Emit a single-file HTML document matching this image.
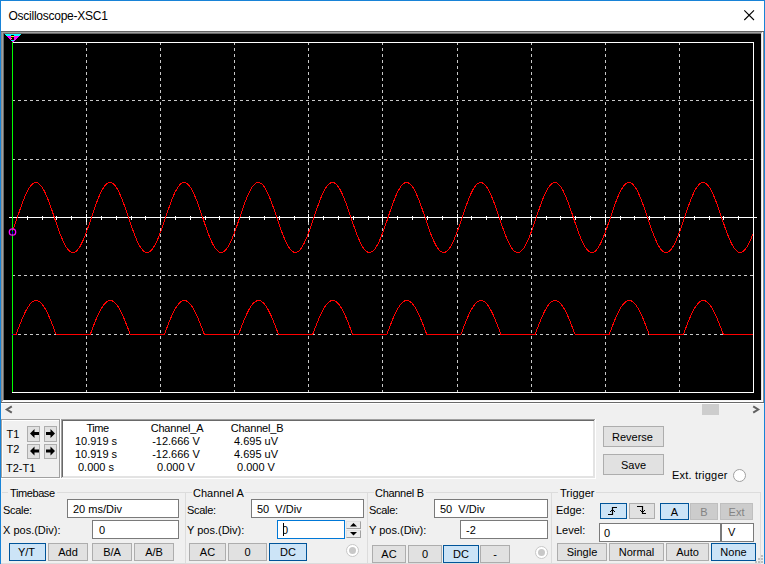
<!DOCTYPE html><html><head><meta charset="utf-8"><style>
html,body{margin:0;padding:0;}
body{width:765px;height:564px;position:relative;overflow:hidden;background:#f0f0f0;font-family:'Liberation Sans', sans-serif;}
.t{position:absolute;white-space:pre;font-size:11px;line-height:13px;}
.r{position:absolute;}
svg{position:absolute;left:0;top:0;}
</style></head><body>
<div class="r" style="left:0px;top:0px;width:765px;height:31px;background:#fff"></div>
<div class="t" style="left:8.5px;top:9px;font-size:12px;color:#000;line-height:14px;letter-spacing:-0.25px">Oscilloscope-XSC1</div>
<svg width="765" height="31" style="left:0;top:0"><path d="M744.3 10.3 L754 20 M754 10.3 L744.3 20" stroke="#000" stroke-width="1.1" fill="none"/></svg>
<div class="r" style="left:1px;top:31px;width:763px;height:372px;background:#8c8c8c"></div>
<div class="r" style="left:2px;top:32px;width:761px;height:370px;background:#fff"></div>
<div class="r" style="left:2px;top:32px;width:760px;height:369px;background:#a0a0a0"></div>
<div class="r" style="left:3px;top:33px;width:759px;height:368px;background:#e3e3e3"></div>
<div class="r" style="left:3px;top:33px;width:758px;height:367px;background:#696969"></div>
<div class="r" style="left:4px;top:34px;width:757px;height:366px;background:#000"></div>
<div class="r" style="left:1px;top:31px;width:763px;height:1px;background:#646464"></div>
<div class="r" style="left:1px;top:402px;width:763px;height:1px;background:#696969"></div>
<div class="r" style="left:1px;top:403px;width:763px;height:1px;background:#fff"></div>
<div class="r" style="left:3px;top:400px;width:759px;height:1px;background:#f4f4f4"></div>
<svg width="765" height="564" style="left:0;top:0"><path d="M86.5 42 V392 M160.5 42 V392 M234.5 42 V392 M308.5 42 V392 M382.5 42 V392 M457.5 42 V392 M531.5 42 V392 M605.5 42 V392 M679.5 42 V392 M12 100.5 H753 M12 159.5 H753 M12 217.5 H753 M12 275.5 H753 M12 334.5 H753" stroke="#c8c8c8" stroke-width="1" stroke-dasharray="3 3" fill="none" shape-rendering="crispEdges"/><path d="M9 217.5 H757 M27.5 216 V220 M42.5 216 V220 M56.5 216 V220 M71.5 216 V220 M86.5 214 V222 M101.5 216 V220 M116.5 216 V220 M131.5 216 V220 M145.5 216 V220 M160.5 214 V222 M175.5 216 V220 M190.5 216 V220 M205.5 216 V220 M219.5 216 V220 M234.5 214 V222 M249.5 216 V220 M264.5 216 V220 M279.5 216 V220 M294.5 216 V220 M308.5 214 V222 M323.5 216 V220 M338.5 216 V220 M353.5 216 V220 M368.5 216 V220 M382.5 214 V222 M397.5 216 V220 M412.5 216 V220 M427.5 216 V220 M442.5 216 V220 M457.5 214 V222 M471.5 216 V220 M486.5 216 V220 M501.5 216 V220 M516.5 216 V220 M531.5 214 V222 M546.5 216 V220 M560.5 216 V220 M575.5 216 V220 M590.5 216 V220 M605.5 214 V222 M620.5 216 V220 M634.5 216 V220 M649.5 216 V220 M664.5 216 V220 M679.5 214 V222 M694.5 216 V220 M709.5 216 V220 M723.5 216 V220 M738.5 216 V220" stroke="#fff" stroke-width="1" fill="none" shape-rendering="crispEdges"/><path d="M12 42.5 H753.5 V392.5 H12" stroke="#fff" stroke-width="1" fill="none" shape-rendering="crispEdges"/><polyline points="12.0,232.7 13.0,230.0 14.0,227.2 15.0,224.3 16.0,221.3 17.0,218.4 18.0,215.4 19.0,212.5 20.0,209.6 21.0,206.7 22.0,203.9 23.0,201.2 24.0,198.7 25.0,196.2 26.0,194.0 27.0,191.9 28.0,189.9 29.0,188.2 30.0,186.7 31.0,185.4 32.0,184.3 33.0,183.5 34.0,182.9 35.0,182.6 36.0,182.5 37.0,182.7 38.0,183.1 39.0,183.8 40.0,184.7 41.0,185.8 42.0,187.2 43.0,188.8 44.0,190.6 45.0,192.5 46.0,194.7 47.0,197.0 48.0,199.5 49.0,202.1 50.0,204.8 51.0,207.6 52.0,210.5 53.0,213.4 54.0,216.4 55.0,219.4 56.0,222.3 57.0,225.2 58.0,228.1 59.0,230.9 60.0,233.6 61.0,236.1 62.0,238.6 63.0,240.9 64.0,243.0 65.0,244.9 66.0,246.7 67.0,248.2 68.0,249.5 69.0,250.6 70.0,251.4 71.0,252.0 72.0,252.4 73.0,252.5 74.0,252.3 75.0,251.9 76.0,251.3 77.0,250.4 78.0,249.3 79.0,247.9 80.0,246.4 81.0,244.6 82.0,242.6 83.0,240.5 84.0,238.1 85.0,235.7 86.0,233.1 87.0,230.4 88.0,227.6 89.0,224.7 90.0,221.8 91.0,218.8 92.0,215.8 93.0,212.9 94.0,210.0 95.0,207.1 96.0,204.3 97.0,201.6 98.0,199.0 99.0,196.6 100.0,194.3 101.0,192.1 102.0,190.2 103.0,188.4 104.0,186.9 105.0,185.6 106.0,184.5 107.0,183.6 108.0,183.0 109.0,182.6 110.0,182.5 111.0,182.6 112.0,183.0 113.0,183.6 114.0,184.5 115.0,185.6 116.0,187.0 117.0,188.5 118.0,190.3 119.0,192.2 120.0,194.4 121.0,196.7 122.0,199.2 123.0,201.7 124.0,204.4 125.0,207.2 126.0,210.1 127.0,213.0 128.0,216.0 129.0,219.0 130.0,221.9 131.0,224.8 132.0,227.7 133.0,230.5 134.0,233.2 135.0,235.8 136.0,238.3 137.0,240.6 138.0,242.7 139.0,244.7 140.0,246.4 141.0,248.0 142.0,249.3 143.0,250.5 144.0,251.3 145.0,252.0 146.0,252.4 147.0,252.5 148.0,252.4 149.0,252.0 150.0,251.4 151.0,250.6 152.0,249.5 153.0,248.1 154.0,246.6 155.0,244.8 156.0,242.9 157.0,240.8 158.0,238.5 159.0,236.0 160.0,233.4 161.0,230.7 162.0,228.0 163.0,225.1 164.0,222.2 165.0,219.2 166.0,216.3 167.0,213.3 168.0,210.4 169.0,207.5 170.0,204.7 171.0,202.0 172.0,199.4 173.0,196.9 174.0,194.6 175.0,192.4 176.0,190.5 177.0,188.7 178.0,187.1 179.0,185.7 180.0,184.6 181.0,183.7 182.0,183.1 183.0,182.7 184.0,182.5 185.0,182.6 186.0,182.9 187.0,183.5 188.0,184.4 189.0,185.5 190.0,186.8 191.0,188.3 192.0,190.0 193.0,192.0 194.0,194.1 195.0,196.4 196.0,198.8 197.0,201.4 198.0,204.1 199.0,206.8 200.0,209.7 201.0,212.6 202.0,215.6 203.0,218.5 204.0,221.5 205.0,224.4 206.0,227.3 207.0,230.1 208.0,232.8 209.0,235.4 210.0,237.9 211.0,240.3 212.0,242.4 213.0,244.4 214.0,246.2 215.0,247.8 216.0,249.2 217.0,250.3 218.0,251.2 219.0,251.9 220.0,252.3 221.0,252.5 222.0,252.4 223.0,252.1 224.0,251.5 225.0,250.7 226.0,249.6 227.0,248.3 228.0,246.8 229.0,245.1 230.0,243.2 231.0,241.1 232.0,238.8 233.0,236.4 234.0,233.8 235.0,231.1 236.0,228.4 237.0,225.5 238.0,222.6 239.0,219.6 240.0,216.7 241.0,213.7 242.0,210.8 243.0,207.9 244.0,205.1 245.0,202.4 246.0,199.7 247.0,197.3 248.0,194.9 249.0,192.7 250.0,190.7 251.0,188.9 252.0,187.3 253.0,185.9 254.0,184.8 255.0,183.8 256.0,183.1 257.0,182.7 258.0,182.5 259.0,182.6 260.0,182.9 261.0,183.4 262.0,184.2 263.0,185.3 264.0,186.6 265.0,188.1 266.0,189.8 267.0,191.7 268.0,193.8 269.0,196.0 270.0,198.5 271.0,201.0 272.0,203.7 273.0,206.5 274.0,209.3 275.0,212.2 276.0,215.2 277.0,218.1 278.0,221.1 279.0,224.0 280.0,226.9 281.0,229.7 282.0,232.5 283.0,235.1 284.0,237.6 285.0,239.9 286.0,242.1 287.0,244.1 288.0,246.0 289.0,247.6 290.0,249.0 291.0,250.2 292.0,251.1 293.0,251.8 294.0,252.3 295.0,252.5 296.0,252.4 297.0,252.1 298.0,251.6 299.0,250.8 300.0,249.8 301.0,248.5 302.0,247.0 303.0,245.4 304.0,243.5 305.0,241.4 306.0,239.1 307.0,236.7 308.0,234.2 309.0,231.5 310.0,228.7 311.0,225.9 312.0,223.0 313.0,220.0 314.0,217.1 315.0,214.1 316.0,211.2 317.0,208.3 318.0,205.5 319.0,202.7 320.0,200.1 321.0,197.6 322.0,195.2 323.0,193.0 324.0,191.0 325.0,189.2 326.0,187.5 327.0,186.1 328.0,184.9 329.0,183.9 330.0,183.2 331.0,182.7 332.0,182.5 333.0,182.5 334.0,182.8 335.0,183.3 336.0,184.1 337.0,185.1 338.0,186.4 339.0,187.8 340.0,189.5 341.0,191.4 342.0,193.5 343.0,195.7 344.0,198.1 345.0,200.6 346.0,203.3 347.0,206.1 348.0,208.9 349.0,211.8 350.0,214.7 351.0,217.7 352.0,220.7 353.0,223.6 354.0,226.5 355.0,229.3 356.0,232.1 357.0,234.7 358.0,237.2 359.0,239.6 360.0,241.8 361.0,243.9 362.0,245.7 363.0,247.4 364.0,248.8 365.0,250.0 366.0,251.0 367.0,251.7 368.0,252.2 369.0,252.5 370.0,252.5 371.0,252.2 372.0,251.7 373.0,250.9 374.0,249.9 375.0,248.7 376.0,247.3 377.0,245.6 378.0,243.7 379.0,241.7 380.0,239.5 381.0,237.1 382.0,234.5 383.0,231.9 384.0,229.1 385.0,226.3 386.0,223.4 387.0,220.5 388.0,217.5 389.0,214.5 390.0,211.6 391.0,208.7 392.0,205.9 393.0,203.1 394.0,200.5 395.0,197.9 396.0,195.5 397.0,193.3 398.0,191.3 399.0,189.4 400.0,187.7 401.0,186.3 402.0,185.1 403.0,184.1 404.0,183.3 405.0,182.8 406.0,182.5 407.0,182.5 408.0,182.8 409.0,183.3 410.0,184.0 411.0,185.0 412.0,186.2 413.0,187.6 414.0,189.3 415.0,191.1 416.0,193.2 417.0,195.4 418.0,197.8 419.0,200.3 420.0,202.9 421.0,205.7 422.0,208.5 423.0,211.4 424.0,214.3 425.0,217.3 426.0,220.3 427.0,223.2 428.0,226.1 429.0,228.9 430.0,231.7 431.0,234.4 432.0,236.9 433.0,239.3 434.0,241.5 435.0,243.6 436.0,245.5 437.0,247.2 438.0,248.6 439.0,249.9 440.0,250.9 441.0,251.7 442.0,252.2 443.0,252.5 444.0,252.5 445.0,252.3 446.0,251.8 447.0,251.1 448.0,250.1 449.0,248.9 450.0,247.5 451.0,245.8 452.0,244.0 453.0,242.0 454.0,239.8 455.0,237.4 456.0,234.9 457.0,232.3 458.0,229.5 459.0,226.7 460.0,223.8 461.0,220.9 462.0,217.9 463.0,215.0 464.0,212.0 465.0,209.1 466.0,206.3 467.0,203.5 468.0,200.8 469.0,198.3 470.0,195.9 471.0,193.6 472.0,191.5 473.0,189.6 474.0,188.0 475.0,186.5 476.0,185.2 477.0,184.2 478.0,183.4 479.0,182.9 480.0,182.6 481.0,182.5 482.0,182.7 483.0,183.2 484.0,183.9 485.0,184.8 486.0,186.0 487.0,187.4 488.0,189.0 489.0,190.9 490.0,192.9 491.0,195.1 492.0,197.4 493.0,199.9 494.0,202.5 495.0,205.3 496.0,208.1 497.0,211.0 498.0,213.9 499.0,216.9 500.0,219.8 501.0,222.8 502.0,225.7 503.0,228.5 504.0,231.3 505.0,234.0 506.0,236.5 507.0,239.0 508.0,241.2 509.0,243.3 510.0,245.2 511.0,246.9 512.0,248.4 513.0,249.7 514.0,250.8 515.0,251.6 516.0,252.1 517.0,252.4 518.0,252.5 519.0,252.3 520.0,251.9 521.0,251.2 522.0,250.2 523.0,249.1 524.0,247.7 525.0,246.1 526.0,244.3 527.0,242.3 528.0,240.1 529.0,237.7 530.0,235.3 531.0,232.6 532.0,229.9 533.0,227.1 534.0,224.2 535.0,221.3 536.0,218.3 537.0,215.4 538.0,212.4 539.0,209.5 540.0,206.6 541.0,203.9 542.0,201.2 543.0,198.6 544.0,196.2 545.0,193.9 546.0,191.8 547.0,189.9 548.0,188.2 549.0,186.7 550.0,185.4 551.0,184.3 552.0,183.5 553.0,182.9 554.0,182.6 555.0,182.5 556.0,182.7 557.0,183.1 558.0,183.8 559.0,184.7 560.0,185.8 561.0,187.2 562.0,188.8 563.0,190.6 564.0,192.6 565.0,194.7 566.0,197.1 567.0,199.6 568.0,202.2 569.0,204.9 570.0,207.7 571.0,210.6 572.0,213.5 573.0,216.5 574.0,219.4 575.0,222.4 576.0,225.3 577.0,228.2 578.0,230.9 579.0,233.6 580.0,236.2 581.0,238.6 582.0,240.9 583.0,243.0 584.0,245.0 585.0,246.7 586.0,248.2 587.0,249.5 588.0,250.6 589.0,251.5 590.0,252.1 591.0,252.4 592.0,252.5 593.0,252.3 594.0,251.9 595.0,251.3 596.0,250.4 597.0,249.3 598.0,247.9 599.0,246.3 600.0,244.5 601.0,242.6 602.0,240.4 603.0,238.1 604.0,235.6 605.0,233.0 606.0,230.3 607.0,227.5 608.0,224.6 609.0,221.7 610.0,218.7 611.0,215.8 612.0,212.8 613.0,209.9 614.0,207.0 615.0,204.3 616.0,201.6 617.0,199.0 618.0,196.5 619.0,194.2 620.0,192.1 621.0,190.2 622.0,188.4 623.0,186.9 624.0,185.5 625.0,184.4 626.0,183.6 627.0,183.0 628.0,182.6 629.0,182.5 630.0,182.6 631.0,183.0 632.0,183.7 633.0,184.5 634.0,185.7 635.0,187.0 636.0,188.6 637.0,190.3 638.0,192.3 639.0,194.4 640.0,196.7 641.0,199.2 642.0,201.8 643.0,204.5 644.0,207.3 645.0,210.2 646.0,213.1 647.0,216.0 648.0,219.0 649.0,222.0 650.0,224.9 651.0,227.8 652.0,230.6 653.0,233.3 654.0,235.8 655.0,238.3 656.0,240.6 657.0,242.8 658.0,244.7 659.0,246.5 660.0,248.0 661.0,249.4 662.0,250.5 663.0,251.4 664.0,252.0 665.0,252.4 666.0,252.5 667.0,252.4 668.0,252.0 669.0,251.4 670.0,250.5 671.0,249.4 672.0,248.1 673.0,246.6 674.0,244.8 675.0,242.9 676.0,240.7 677.0,238.4 678.0,236.0 679.0,233.4 680.0,230.7 681.0,227.9 682.0,225.0 683.0,222.1 684.0,219.2 685.0,216.2 686.0,213.2 687.0,210.3 688.0,207.4 689.0,204.6 690.0,201.9 691.0,199.3 692.0,196.9 693.0,194.5 694.0,192.4 695.0,190.4 696.0,188.6 697.0,187.1 698.0,185.7 699.0,184.6 700.0,183.7 701.0,183.1 702.0,182.7 703.0,182.5 704.0,182.6 705.0,183.0 706.0,183.6 707.0,184.4 708.0,185.5 709.0,186.8 710.0,188.3 711.0,190.1 712.0,192.0 713.0,194.1 714.0,196.4 715.0,198.9 716.0,201.4 717.0,204.1 718.0,206.9 719.0,209.8 720.0,212.7 721.0,215.6 722.0,218.6 723.0,221.6 724.0,224.5 725.0,227.4 726.0,230.2 727.0,232.9 728.0,235.5 729.0,238.0 730.0,240.3 731.0,242.5 732.0,244.4 733.0,246.2 734.0,247.8 735.0,249.2 736.0,250.3 737.0,251.2 738.0,251.9 739.0,252.3 740.0,252.5 741.0,252.4 742.0,252.1 743.0,251.5 744.0,250.7 745.0,249.6 746.0,248.3 747.0,246.8 748.0,245.1 749.0,243.1 750.0,241.0 751.0,238.8 752.0,236.3 753.0,233.8" stroke="#ff0000" stroke-width="1" fill="none" shape-rendering="crispEdges"/><polyline points="12.0,334.5 13.0,334.5 14.0,334.5 15.0,334.5 16.0,334.5 17.0,332.1 18.0,329.4 19.0,326.8 20.0,324.2 21.0,321.7 22.0,319.3 23.0,317.0 24.0,314.7 25.0,312.6 26.0,310.6 27.0,308.8 28.0,307.2 29.0,305.7 30.0,304.3 31.0,303.2 32.0,302.2 33.0,301.5 34.0,301.0 35.0,300.6 36.0,300.5 37.0,300.6 38.0,300.9 39.0,301.4 40.0,302.1 41.0,303.0 42.0,304.1 43.0,305.4 44.0,306.8 45.0,308.5 46.0,310.3 47.0,312.2 48.0,314.3 49.0,316.5 50.0,318.8 51.0,321.2 52.0,323.7 53.0,326.3 54.0,328.9 55.0,331.6 56.0,334.2 57.0,334.5 58.0,334.5 59.0,334.5 60.0,334.5 61.0,334.5 62.0,334.5 63.0,334.5 64.0,334.5 65.0,334.5 66.0,334.5 67.0,334.5 68.0,334.5 69.0,334.5 70.0,334.5 71.0,334.5 72.0,334.5 73.0,334.5 74.0,334.5 75.0,334.5 76.0,334.5 77.0,334.5 78.0,334.5 79.0,334.5 80.0,334.5 81.0,334.5 82.0,334.5 83.0,334.5 84.0,334.5 85.0,334.5 86.0,334.5 87.0,334.5 88.0,334.5 89.0,334.5 90.0,334.5 91.0,332.5 92.0,329.8 93.0,327.2 94.0,324.6 95.0,322.1 96.0,319.6 97.0,317.3 98.0,315.0 99.0,312.9 100.0,310.9 101.0,309.1 102.0,307.4 103.0,305.9 104.0,304.5 105.0,303.3 106.0,302.4 107.0,301.6 108.0,301.0 109.0,300.7 110.0,300.5 111.0,300.6 112.0,300.8 113.0,301.3 114.0,302.0 115.0,302.8 116.0,303.9 117.0,305.2 118.0,306.6 119.0,308.2 120.0,310.0 121.0,311.9 122.0,314.0 123.0,316.2 124.0,318.5 125.0,320.9 126.0,323.4 127.0,325.9 128.0,328.5 129.0,331.2 130.0,333.9 131.0,334.5 132.0,334.5 133.0,334.5 134.0,334.5 135.0,334.5 136.0,334.5 137.0,334.5 138.0,334.5 139.0,334.5 140.0,334.5 141.0,334.5 142.0,334.5 143.0,334.5 144.0,334.5 145.0,334.5 146.0,334.5 147.0,334.5 148.0,334.5 149.0,334.5 150.0,334.5 151.0,334.5 152.0,334.5 153.0,334.5 154.0,334.5 155.0,334.5 156.0,334.5 157.0,334.5 158.0,334.5 159.0,334.5 160.0,334.5 161.0,334.5 162.0,334.5 163.0,334.5 164.0,334.5 165.0,332.8 166.0,330.2 167.0,327.6 168.0,325.0 169.0,322.4 170.0,320.0 171.0,317.6 172.0,315.3 173.0,313.2 174.0,311.2 175.0,309.3 176.0,307.6 177.0,306.1 178.0,304.7 179.0,303.5 180.0,302.5 181.0,301.7 182.0,301.1 183.0,300.7 184.0,300.5 185.0,300.5 186.0,300.8 187.0,301.2 188.0,301.9 189.0,302.7 190.0,303.8 191.0,305.0 192.0,306.4 193.0,308.0 194.0,309.8 195.0,311.7 196.0,313.7 197.0,315.9 198.0,318.2 199.0,320.6 200.0,323.0 201.0,325.6 202.0,328.2 203.0,330.8 204.0,333.5 205.0,334.5 206.0,334.5 207.0,334.5 208.0,334.5 209.0,334.5 210.0,334.5 211.0,334.5 212.0,334.5 213.0,334.5 214.0,334.5 215.0,334.5 216.0,334.5 217.0,334.5 218.0,334.5 219.0,334.5 220.0,334.5 221.0,334.5 222.0,334.5 223.0,334.5 224.0,334.5 225.0,334.5 226.0,334.5 227.0,334.5 228.0,334.5 229.0,334.5 230.0,334.5 231.0,334.5 232.0,334.5 233.0,334.5 234.0,334.5 235.0,334.5 236.0,334.5 237.0,334.5 238.0,334.5 239.0,333.2 240.0,330.6 241.0,327.9 242.0,325.3 243.0,322.8 244.0,320.3 245.0,317.9 246.0,315.7 247.0,313.5 248.0,311.5 249.0,309.6 250.0,307.8 251.0,306.3 252.0,304.9 253.0,303.6 254.0,302.6 255.0,301.8 256.0,301.2 257.0,300.7 258.0,300.5 259.0,300.5 260.0,300.7 261.0,301.1 262.0,301.8 263.0,302.6 264.0,303.6 265.0,304.8 266.0,306.2 267.0,307.8 268.0,309.5 269.0,311.4 270.0,313.4 271.0,315.6 272.0,317.8 273.0,320.2 274.0,322.7 275.0,325.2 276.0,327.8 277.0,330.5 278.0,333.1 279.0,334.5 280.0,334.5 281.0,334.5 282.0,334.5 283.0,334.5 284.0,334.5 285.0,334.5 286.0,334.5 287.0,334.5 288.0,334.5 289.0,334.5 290.0,334.5 291.0,334.5 292.0,334.5 293.0,334.5 294.0,334.5 295.0,334.5 296.0,334.5 297.0,334.5 298.0,334.5 299.0,334.5 300.0,334.5 301.0,334.5 302.0,334.5 303.0,334.5 304.0,334.5 305.0,334.5 306.0,334.5 307.0,334.5 308.0,334.5 309.0,334.5 310.0,334.5 311.0,334.5 312.0,334.5 313.0,333.6 314.0,330.9 315.0,328.3 316.0,325.7 317.0,323.1 318.0,320.7 319.0,318.3 320.0,316.0 321.0,313.8 322.0,311.7 323.0,309.8 324.0,308.1 325.0,306.5 326.0,305.0 327.0,303.8 328.0,302.8 329.0,301.9 330.0,301.2 331.0,300.8 332.0,300.5 333.0,300.5 334.0,300.7 335.0,301.1 336.0,301.7 337.0,302.5 338.0,303.4 339.0,304.6 340.0,306.0 341.0,307.5 342.0,309.2 343.0,311.1 344.0,313.1 345.0,315.3 346.0,317.5 347.0,319.9 348.0,322.3 349.0,324.9 350.0,327.4 351.0,330.1 352.0,332.7 353.0,334.5 354.0,334.5 355.0,334.5 356.0,334.5 357.0,334.5 358.0,334.5 359.0,334.5 360.0,334.5 361.0,334.5 362.0,334.5 363.0,334.5 364.0,334.5 365.0,334.5 366.0,334.5 367.0,334.5 368.0,334.5 369.0,334.5 370.0,334.5 371.0,334.5 372.0,334.5 373.0,334.5 374.0,334.5 375.0,334.5 376.0,334.5 377.0,334.5 378.0,334.5 379.0,334.5 380.0,334.5 381.0,334.5 382.0,334.5 383.0,334.5 384.0,334.5 385.0,334.5 386.0,334.5 387.0,334.0 388.0,331.3 389.0,328.7 390.0,326.0 391.0,323.5 392.0,321.0 393.0,318.6 394.0,316.3 395.0,314.1 396.0,312.0 397.0,310.1 398.0,308.3 399.0,306.7 400.0,305.2 401.0,304.0 402.0,302.9 403.0,302.0 404.0,301.3 405.0,300.8 406.0,300.6 407.0,300.5 408.0,300.7 409.0,301.0 410.0,301.6 411.0,302.3 412.0,303.3 413.0,304.5 414.0,305.8 415.0,307.3 416.0,309.0 417.0,310.8 418.0,312.8 419.0,314.9 420.0,317.2 421.0,319.5 422.0,322.0 423.0,324.5 424.0,327.1 425.0,329.7 426.0,332.4 427.0,334.5 428.0,334.5 429.0,334.5 430.0,334.5 431.0,334.5 432.0,334.5 433.0,334.5 434.0,334.5 435.0,334.5 436.0,334.5 437.0,334.5 438.0,334.5 439.0,334.5 440.0,334.5 441.0,334.5 442.0,334.5 443.0,334.5 444.0,334.5 445.0,334.5 446.0,334.5 447.0,334.5 448.0,334.5 449.0,334.5 450.0,334.5 451.0,334.5 452.0,334.5 453.0,334.5 454.0,334.5 455.0,334.5 456.0,334.5 457.0,334.5 458.0,334.5 459.0,334.5 460.0,334.5 461.0,334.3 462.0,331.7 463.0,329.0 464.0,326.4 465.0,323.8 466.0,321.3 467.0,318.9 468.0,316.6 469.0,314.4 470.0,312.3 471.0,310.3 472.0,308.5 473.0,306.9 474.0,305.4 475.0,304.1 476.0,303.0 477.0,302.1 478.0,301.4 479.0,300.9 480.0,300.6 481.0,300.5 482.0,300.6 483.0,300.9 484.0,301.5 485.0,302.2 486.0,303.1 487.0,304.3 488.0,305.6 489.0,307.1 490.0,308.8 491.0,310.6 492.0,312.5 493.0,314.6 494.0,316.9 495.0,319.2 496.0,321.6 497.0,324.1 498.0,326.7 499.0,329.3 500.0,332.0 501.0,334.5 502.0,334.5 503.0,334.5 504.0,334.5 505.0,334.5 506.0,334.5 507.0,334.5 508.0,334.5 509.0,334.5 510.0,334.5 511.0,334.5 512.0,334.5 513.0,334.5 514.0,334.5 515.0,334.5 516.0,334.5 517.0,334.5 518.0,334.5 519.0,334.5 520.0,334.5 521.0,334.5 522.0,334.5 523.0,334.5 524.0,334.5 525.0,334.5 526.0,334.5 527.0,334.5 528.0,334.5 529.0,334.5 530.0,334.5 531.0,334.5 532.0,334.5 533.0,334.5 534.0,334.5 535.0,334.5 536.0,332.0 537.0,329.4 538.0,326.8 539.0,324.2 540.0,321.7 541.0,319.3 542.0,316.9 543.0,314.7 544.0,312.6 545.0,310.6 546.0,308.8 547.0,307.1 548.0,305.6 549.0,304.3 550.0,303.2 551.0,302.2 552.0,301.5 553.0,301.0 554.0,300.6 555.0,300.5 556.0,300.6 557.0,300.9 558.0,301.4 559.0,302.1 560.0,303.0 561.0,304.1 562.0,305.4 563.0,306.9 564.0,308.5 565.0,310.3 566.0,312.3 567.0,314.3 568.0,316.6 569.0,318.9 570.0,321.3 571.0,323.8 572.0,326.4 573.0,329.0 574.0,331.6 575.0,334.3 576.0,334.5 577.0,334.5 578.0,334.5 579.0,334.5 580.0,334.5 581.0,334.5 582.0,334.5 583.0,334.5 584.0,334.5 585.0,334.5 586.0,334.5 587.0,334.5 588.0,334.5 589.0,334.5 590.0,334.5 591.0,334.5 592.0,334.5 593.0,334.5 594.0,334.5 595.0,334.5 596.0,334.5 597.0,334.5 598.0,334.5 599.0,334.5 600.0,334.5 601.0,334.5 602.0,334.5 603.0,334.5 604.0,334.5 605.0,334.5 606.0,334.5 607.0,334.5 608.0,334.5 609.0,334.5 610.0,332.4 611.0,329.8 612.0,327.1 613.0,324.6 614.0,322.0 615.0,319.6 616.0,317.2 617.0,315.0 618.0,312.9 619.0,310.9 620.0,309.0 621.0,307.3 622.0,305.8 623.0,304.5 624.0,303.3 625.0,302.4 626.0,301.6 627.0,301.0 628.0,300.7 629.0,300.5 630.0,300.6 631.0,300.8 632.0,301.3 633.0,302.0 634.0,302.9 635.0,303.9 636.0,305.2 637.0,306.7 638.0,308.3 639.0,310.0 640.0,312.0 641.0,314.0 642.0,316.2 643.0,318.5 644.0,320.9 645.0,323.4 646.0,326.0 647.0,328.6 648.0,331.2 649.0,333.9 650.0,334.5 651.0,334.5 652.0,334.5 653.0,334.5 654.0,334.5 655.0,334.5 656.0,334.5 657.0,334.5 658.0,334.5 659.0,334.5 660.0,334.5 661.0,334.5 662.0,334.5 663.0,334.5 664.0,334.5 665.0,334.5 666.0,334.5 667.0,334.5 668.0,334.5 669.0,334.5 670.0,334.5 671.0,334.5 672.0,334.5 673.0,334.5 674.0,334.5 675.0,334.5 676.0,334.5 677.0,334.5 678.0,334.5 679.0,334.5 680.0,334.5 681.0,334.5 682.0,334.5 683.0,334.5 684.0,332.8 685.0,330.1 686.0,327.5 687.0,324.9 688.0,322.4 689.0,319.9 690.0,317.6 691.0,315.3 692.0,313.2 693.0,311.1 694.0,309.3 695.0,307.6 696.0,306.0 697.0,304.7 698.0,303.5 699.0,302.5 700.0,301.7 701.0,301.1 702.0,300.7 703.0,300.5 704.0,300.5 705.0,300.8 706.0,301.2 707.0,301.9 708.0,302.7 709.0,303.8 710.0,305.0 711.0,306.4 712.0,308.0 713.0,309.8 714.0,311.7 715.0,313.7 716.0,315.9 717.0,318.2 718.0,320.6 719.0,323.1 720.0,325.6 721.0,328.2 722.0,330.9 723.0,333.5 724.0,334.5 725.0,334.5 726.0,334.5 727.0,334.5 728.0,334.5 729.0,334.5 730.0,334.5 731.0,334.5 732.0,334.5 733.0,334.5 734.0,334.5 735.0,334.5 736.0,334.5 737.0,334.5 738.0,334.5 739.0,334.5 740.0,334.5 741.0,334.5 742.0,334.5 743.0,334.5 744.0,334.5 745.0,334.5 746.0,334.5 747.0,334.5 748.0,334.5 749.0,334.5 750.0,334.5 751.0,334.5 752.0,334.5 753.0,334.5" stroke="#ff0000" stroke-width="1" fill="none" shape-rendering="crispEdges"/><path d="M12.5 42 V392" stroke="#00ff00" stroke-width="1" shape-rendering="crispEdges"/><circle cx="12.5" cy="232" r="3.2" stroke="#ff00ff" stroke-width="1.3" fill="none"/><rect x="12" y="231" width="1" height="3" fill="#0000ff"/><rect x="12" y="334" width="1" height="1" fill="#0000ff"/><path d="M4 34 H21.5 L12.75 42.5 Z" fill="#ff00ff" shape-rendering="crispEdges"/><path d="M4 34 H21.5 L19.4 36 H6.1 Z" fill="#00ffff" shape-rendering="crispEdges"/><rect x="11" y="35" width="3" height="5" fill="#000"/><rect x="11" y="36" width="3" height="1" fill="#ffff00"/><rect x="11" y="38" width="1" height="1" fill="#ffff00"/><rect x="11" y="40" width="3" height="1" fill="#00ffff"/></svg>
<svg width="765" height="564" style="left:0;top:0"><path d="M11.8 406.3 L6.8 409.5 L11.8 412.7" stroke="#606060" stroke-width="2" fill="none"/><path d="M753.2 406.3 L758.2 409.5 L753.2 412.7" stroke="#606060" stroke-width="2" fill="none"/></svg>
<div class="r" style="left:702px;top:404px;width:17px;height:11px;background:#cdcdcd"></div>
<div class="r" style="left:1px;top:419px;width:59px;height:59px;border-top:1px solid #a0a0a0;border-left:1px solid #a0a0a0;box-sizing:border-box"></div>
<div class="r" style="left:2px;top:420px;width:59px;height:59px;border-top:1px solid #fff;border-left:1px solid #fff;box-sizing:border-box"></div>
<div class="r" style="left:59px;top:419px;width:1px;height:59px;background:#a0a0a0"></div>
<div class="r" style="left:1px;top:477px;width:59px;height:1px;background:#a0a0a0"></div>
<div class="r" style="left:60px;top:419px;width:1px;height:60px;background:#fff"></div>
<div class="r" style="left:1px;top:478px;width:60px;height:1px;background:#fff"></div>
<div class="t" style="left:6.5px;top:428px;font-size:11px;color:#000;">T1</div>
<div class="t" style="left:6.5px;top:443px;font-size:11px;color:#000;">T2</div>
<div class="t" style="left:6px;top:462px;font-size:11px;color:#000;">T2-T1</div>
<div class="r" style="left:27px;top:426px;width:13px;height:16px;border:1px solid #adadad;background:#e1e1e1;box-sizing:border-box"></div>
<div class="r" style="left:44px;top:426px;width:13px;height:16px;border:1px solid #adadad;background:#e1e1e1;box-sizing:border-box"></div>
<div class="r" style="left:27px;top:444px;width:13px;height:15px;border:1px solid #adadad;background:#e1e1e1;box-sizing:border-box"></div>
<div class="r" style="left:44px;top:444px;width:13px;height:15px;border:1px solid #adadad;background:#e1e1e1;box-sizing:border-box"></div>
<svg width="765" height="564" style="left:0;top:0"><path d="M30 433.5 L34.5 429 V432 H39 V435 H34.5 V438 Z" fill="#000"/><path d="M55 433.5 L50.5 429 V432 H46 V435 H50.5 V438 Z" fill="#000"/><path d="M30 451 L34.5 446.5 V449.5 H39 V452.5 H34.5 V455.5 Z" fill="#000"/><path d="M55 451 L50.5 446.5 V449.5 H46 V452.5 H50.5 V455.5 Z" fill="#000"/></svg>
<div class="r" style="left:61px;top:419px;width:535px;height:60px;background:#fff"></div>
<div class="r" style="left:61px;top:419px;width:534px;height:59px;background:#e3e3e3"></div>
<div class="r" style="left:61px;top:419px;width:534px;height:59px;border-top:1px solid #a0a0a0;border-left:1px solid #a0a0a0;box-sizing:border-box;background:#e3e3e3"></div>
<div class="r" style="left:62px;top:420px;width:532px;height:57px;background:#696969"></div>
<div class="r" style="left:63px;top:421px;width:531px;height:56px;background:#e3e3e3"></div>
<div class="r" style="left:63px;top:421px;width:530px;height:55px;background:#fff"></div>
<div class="t" style="left:-2.5px;top:422px;width:200px;text-align:center;letter-spacing:-0.5px">Time</div>
<div class="t" style="left:77px;top:422px;width:200px;text-align:center;letter-spacing:-0.2px">Channel_A</div>
<div class="t" style="left:157px;top:422px;width:200px;text-align:center;letter-spacing:-0.2px">Channel_B</div>
<div class="t" style="left:-4.0px;top:435px;width:200px;text-align:center;font-size:11px;color:#000">10.919 s</div>
<div class="t" style="left:76.0px;top:435px;width:200px;text-align:center;font-size:11px;color:#000">-12.666 V</div>
<div class="t" style="left:156.0px;top:435px;width:200px;text-align:center;font-size:11px;color:#000">4.695 uV</div>
<div class="t" style="left:-4.0px;top:448px;width:200px;text-align:center;font-size:11px;color:#000">10.919 s</div>
<div class="t" style="left:76.0px;top:448px;width:200px;text-align:center;font-size:11px;color:#000">-12.666 V</div>
<div class="t" style="left:156.0px;top:448px;width:200px;text-align:center;font-size:11px;color:#000">4.695 uV</div>
<div class="t" style="left:-4.0px;top:461px;width:200px;text-align:center;font-size:11px;color:#000">0.000 s</div>
<div class="t" style="left:76.0px;top:461px;width:200px;text-align:center;font-size:11px;color:#000">0.000 V</div>
<div class="t" style="left:156.0px;top:461px;width:200px;text-align:center;font-size:11px;color:#000">0.000 V</div>
<div class="r" style="left:603px;top:426px;width:61px;height:21px;border:1px solid #adadad;background:#e1e1e1;box-sizing:border-box"></div>
<div class="t" style="left:532.5px;top:431px;width:200px;text-align:center;font-size:11px;color:#000">Reverse</div>
<div class="r" style="left:603px;top:454px;width:61px;height:21px;border:1px solid #adadad;background:#e1e1e1;box-sizing:border-box"></div>
<div class="t" style="left:533.5px;top:459px;width:200px;text-align:center;font-size:11px;color:#000">Save</div>
<div class="t" style="left:672px;top:469px;font-size:11px;color:#000;letter-spacing:0.2px">Ext. trigger</div>
<svg width="765" height="564" style="left:0;top:0"><circle cx="739.5" cy="475.5" r="6" fill="#fff" stroke="#a0a0a0" stroke-width="1"/></svg>
<svg width="765" height="564" style="left:0;top:0">
<path d="M2 492.5 H8 M57 492.5 H192 M245 492.5 H374 M426 492.5 H558 M596 492.5 H761 M185.5 492 V563 M367.5 492 V563 M551.5 492 V563 M760.5 492 V563 M1 563.5 H761" stroke="#dcdcdc" stroke-width="1" fill="none" shape-rendering="crispEdges"/></svg>
<div class="t" style="left:10px;top:487px;font-size:11px;color:#000;letter-spacing:-0.4px">Timebase</div>
<div class="t" style="left:193px;top:487px;font-size:11px;color:#000;">Channel A</div>
<div class="t" style="left:375px;top:487px;font-size:11px;color:#000;letter-spacing:-0.3px">Channel B</div>
<div class="t" style="left:560px;top:487px;font-size:11px;color:#000;">Trigger</div>
<div class="t" style="left:3px;top:504px;font-size:11px;color:#000;letter-spacing:-0.3px">Scale:</div>
<div class="r" style="left:67px;top:499px;width:112px;height:19px;border:1px solid #7a7a7a;background:#fff;box-sizing:border-box"></div>
<div class="t" style="left:73px;top:503px;font-size:11px;color:#000;">20 ms/Div</div>
<div class="t" style="left:3px;top:524px;font-size:11px;color:#000;">X pos.(Div):</div>
<div class="r" style="left:92px;top:520px;width:87px;height:19px;border:1px solid #7a7a7a;background:#fff;box-sizing:border-box"></div>
<div class="t" style="left:99px;top:524px;font-size:11px;color:#000;">0</div>
<div class="r" style="left:9px;top:543px;width:37px;height:18px;border:1px solid #005499;background:#cce4f7;box-sizing:border-box"></div>
<div class="t" style="left:-73.5px;top:546px;width:200px;text-align:center;font-size:11px;color:#000">Y/T</div>
<div class="r" style="left:48px;top:543px;width:40px;height:18px;border:1px solid #adadad;background:#e1e1e1;box-sizing:border-box"></div>
<div class="t" style="left:-32.0px;top:546px;width:200px;text-align:center;font-size:11px;color:#000">Add</div>
<div class="r" style="left:92px;top:543px;width:40px;height:18px;border:1px solid #adadad;background:#e1e1e1;box-sizing:border-box"></div>
<div class="t" style="left:12.0px;top:546px;width:200px;text-align:center;font-size:11px;color:#000">B/A</div>
<div class="r" style="left:134px;top:543px;width:40px;height:18px;border:1px solid #adadad;background:#e1e1e1;box-sizing:border-box"></div>
<div class="t" style="left:54.0px;top:546px;width:200px;text-align:center;font-size:11px;color:#000">A/B</div>
<div class="t" style="left:187px;top:504px;font-size:11px;color:#000;letter-spacing:-0.3px">Scale:</div>
<div class="r" style="left:251px;top:499px;width:113px;height:19px;border:1px solid #7a7a7a;background:#fff;box-sizing:border-box"></div>
<div class="t" style="left:257px;top:503px;font-size:11px;color:#000;">50  V/Div</div>
<div class="t" style="left:187px;top:524px;font-size:11px;color:#000;">Y pos.(Div):</div>
<div class="r" style="left:277px;top:520px;width:68px;height:19px;border:1px solid #0078d7;background:#fff;box-sizing:border-box"></div>
<div class="t" style="left:282px;top:524px;font-size:11px;color:#000;">0</div>
<div class="r" style="left:280px;top:523px;width:3px;height:14px;background:#fff"></div>
<div class="r" style="left:283px;top:523px;width:1px;height:13px;background:#000"></div>
<div class="r" style="left:346px;top:521px;width:15px;height:8px;border:1px solid;border-color:#e0e0e0 #a0a0a0 #a0a0a0 #e0e0e0;background:#ececec;box-sizing:border-box"></div>
<div class="r" style="left:346px;top:530px;width:15px;height:8px;border:1px solid;border-color:#e0e0e0 #a0a0a0 #a0a0a0 #e0e0e0;background:#ececec;box-sizing:border-box"></div>
<svg width="765" height="564" style="left:0;top:0"><path d="M350 526.5 L353.5 523 L357 526.5 Z" fill="#000"/><path d="M350 532 L353.5 535.5 L357 532 Z" fill="#000"/><circle cx="352.5" cy="550.5" r="6" fill="#fff" stroke="#c8c8c8" stroke-width="1"/><circle cx="352.5" cy="550.5" r="3.5" fill="#c8c8c8"/></svg>
<div class="r" style="left:189px;top:543px;width:37px;height:18px;border:1px solid #adadad;background:#e1e1e1;box-sizing:border-box"></div>
<div class="t" style="left:107.5px;top:546px;width:200px;text-align:center;font-size:11px;color:#000">AC</div>
<div class="r" style="left:228px;top:543px;width:39px;height:18px;border:1px solid #adadad;background:#e1e1e1;box-sizing:border-box"></div>
<div class="t" style="left:147.5px;top:546px;width:200px;text-align:center;font-size:11px;color:#000">0</div>
<div class="r" style="left:269px;top:543px;width:38px;height:18px;border:1px solid #005499;background:#cce4f7;box-sizing:border-box"></div>
<div class="t" style="left:188.0px;top:546px;width:200px;text-align:center;font-size:11px;color:#000">DC</div>
<div class="t" style="left:369px;top:504px;font-size:11px;color:#000;letter-spacing:-0.3px">Scale:</div>
<div class="r" style="left:434px;top:499px;width:114px;height:19px;border:1px solid #7a7a7a;background:#fff;box-sizing:border-box"></div>
<div class="t" style="left:440px;top:503px;font-size:11px;color:#000;">50  V/Div</div>
<div class="t" style="left:369px;top:524px;font-size:11px;color:#000;">Y pos.(Div):</div>
<div class="r" style="left:460px;top:520px;width:88px;height:19px;border:1px solid #7a7a7a;background:#fff;box-sizing:border-box"></div>
<div class="t" style="left:466px;top:524px;font-size:11px;color:#000;">-2</div>
<div class="r" style="left:372px;top:545px;width:34px;height:18px;border:1px solid #adadad;background:#e1e1e1;box-sizing:border-box"></div>
<div class="t" style="left:289.0px;top:548px;width:200px;text-align:center;font-size:11px;color:#000">AC</div>
<div class="r" style="left:408px;top:545px;width:34px;height:18px;border:1px solid #adadad;background:#e1e1e1;box-sizing:border-box"></div>
<div class="t" style="left:325.0px;top:548px;width:200px;text-align:center;font-size:11px;color:#000">0</div>
<div class="r" style="left:443px;top:545px;width:36px;height:18px;border:1px solid #005499;background:#cce4f7;box-sizing:border-box"></div>
<div class="t" style="left:361.0px;top:548px;width:200px;text-align:center;font-size:11px;color:#000">DC</div>
<div class="r" style="left:480px;top:545px;width:30px;height:18px;border:1px solid #adadad;background:#e1e1e1;box-sizing:border-box"></div>
<div class="t" style="left:395.0px;top:548px;width:200px;text-align:center;font-size:11px;color:#000">-</div>
<svg width="765" height="564" style="left:0;top:0"><circle cx="541.5" cy="552.5" r="6" fill="#fff" stroke="#c8c8c8" stroke-width="1"/><circle cx="541.5" cy="552.5" r="3.5" fill="#c8c8c8"/></svg>
<div class="t" style="left:556px;top:504px;font-size:11px;color:#000;">Edge:</div>
<div class="t" style="left:556px;top:524px;font-size:11px;color:#000;">Level:</div>
<div class="r" style="left:600px;top:503px;width:27px;height:16px;border:1px solid #005499;background:#cce4f7;box-sizing:border-box"></div>
<div class="r" style="left:629px;top:503px;width:26px;height:16px;border:1px solid #adadad;background:#e1e1e1;box-sizing:border-box"></div>
<svg width="765" height="564" style="left:0;top:0"><path d="M608 514.5 H612.5 V507.5 H617" stroke="#000" stroke-width="1.2" fill="none"/><path d="M610 512 L612.5 509.5 L615 512" stroke="#000" stroke-width="1" fill="none"/><path d="M637 506.5 H642.5 V513.5 H646" stroke="#000" stroke-width="1.2" fill="none"/><path d="M640 510 L642.5 512.5 L645 510" stroke="#000" stroke-width="1" fill="none"/></svg>
<div class="r" style="left:660px;top:503px;width:29px;height:17px;border:1px solid #005499;background:#cce4f7;box-sizing:border-box"></div>
<div class="t" style="left:574.5px;top:506px;width:200px;text-align:center;font-size:11px;color:#000">A</div>
<div class="r" style="left:690px;top:503px;width:28px;height:17px;border:1px solid #bfbfbf;background:#cccccc;box-sizing:border-box"></div>
<div class="t" style="left:604.0px;top:506px;width:200px;text-align:center;font-size:11px;color:#838383">B</div>
<div class="r" style="left:720px;top:503px;width:33px;height:17px;border:1px solid #bfbfbf;background:#cccccc;box-sizing:border-box"></div>
<div class="t" style="left:636.5px;top:506px;width:200px;text-align:center;font-size:11px;color:#838383">Ext</div>
<div class="r" style="left:599px;top:523px;width:122px;height:19px;border:1px solid #7a7a7a;background:#fff;box-sizing:border-box"></div>
<div class="t" style="left:604px;top:527px;font-size:11px;color:#000;">0</div>
<div class="r" style="left:721px;top:523px;width:33px;height:19px;border:1px solid #7a7a7a;background:#fff;box-sizing:border-box"></div>
<div class="t" style="left:728px;top:526px;font-size:11px;color:#000;">V</div>
<div class="r" style="left:557px;top:543px;width:50px;height:18px;border:1px solid #adadad;background:#e1e1e1;box-sizing:border-box"></div>
<div class="t" style="left:482.0px;top:546px;width:200px;text-align:center;font-size:11px;color:#000">Single</div>
<div class="r" style="left:609px;top:543px;width:55px;height:18px;border:1px solid #adadad;background:#e1e1e1;box-sizing:border-box"></div>
<div class="t" style="left:536.5px;top:546px;width:200px;text-align:center;font-size:11px;color:#000">Normal</div>
<div class="r" style="left:666px;top:543px;width:43px;height:18px;border:1px solid #adadad;background:#e1e1e1;box-sizing:border-box"></div>
<div class="t" style="left:587.5px;top:546px;width:200px;text-align:center;font-size:11px;color:#000">Auto</div>
<div class="r" style="left:711px;top:543px;width:45px;height:18px;border:1px solid #005499;background:#cce4f7;box-sizing:border-box"></div>
<div class="t" style="left:633.5px;top:546px;width:200px;text-align:center;font-size:11px;color:#000">None</div>
<svg width="765" height="564" style="left:0;top:0">
<rect x="761" y="555" width="2" height="2" fill="#bdbdbd"/>
<rect x="761" y="558" width="2" height="2" fill="#bdbdbd"/>
<rect x="758" y="558" width="2" height="2" fill="#bdbdbd"/>
<rect x="761" y="561" width="2" height="2" fill="#bdbdbd"/>
<rect x="758" y="561" width="2" height="2" fill="#bdbdbd"/>
<rect x="755" y="561" width="2" height="2" fill="#bdbdbd"/>
</svg>
<div class="r" style="left:0px;top:0px;width:765px;height:1px;background:#1883d7"></div>
<div class="r" style="left:0px;top:0px;width:1px;height:564px;background:#1883d7"></div>
<div class="r" style="left:764px;top:0px;width:1px;height:564px;background:#1883d7"></div>
</body></html>
